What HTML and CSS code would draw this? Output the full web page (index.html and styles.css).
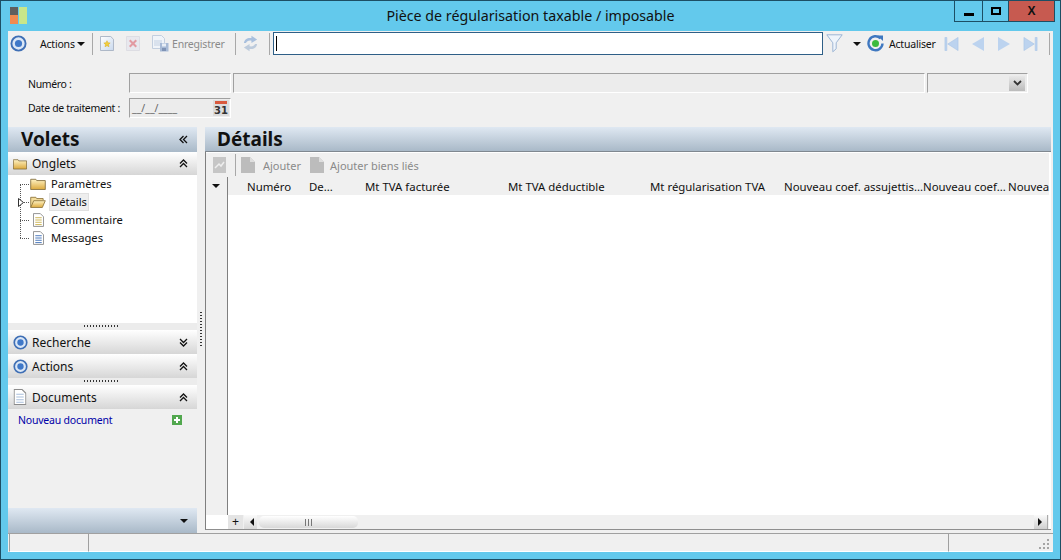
FILE: index.html
```html
<!DOCTYPE html>
<html lang="fr">
<head>
<meta charset="utf-8">
<title>Pièce de régularisation taxable / imposable</title>
<link rel="stylesheet" href="styles.css">
</head>
<body>
<svg class="defs" width="0" height="0">
  <defs>
    <linearGradient id="folderG" x1="0" y1="0" x2="0" y2="1"><stop offset="0" stop-color="#fff3c4"/><stop offset="1" stop-color="#dca93c"/></linearGradient>
    <linearGradient id="pageG" x1="0" y1="0" x2="1" y2="1"><stop offset="0" stop-color="#ffffff"/><stop offset="1" stop-color="#c9d9ee"/></linearGradient>
    <symbol id="target" viewBox="0 0 18 18"><circle cx="9" cy="9" r="7.500" fill="#dbe7f6" stroke="#3f6fb5" stroke-width="2"/><circle cx="9" cy="9" r="3.800" fill="#3f78c8"/></symbol>
    <symbol id="folder" viewBox="0 0 18 14"><path d="M.5 2.500V1.500h6l1 1.500h10v10.500H.5z" fill="url(#folderG)" stroke="#7f6a3a"/></symbol>
    <symbol id="folderOpen" viewBox="0 0 18 14"><path d="M.5 13V1.500h6l1 1.500h7.500v2" fill="#f3dc9a" stroke="#8b7238"/><path d="M.5 13.500 4 5.500h13.500l-3.500 8z" fill="url(#folderG)" stroke="#8b7238"/></symbol>
    <symbol id="doc" viewBox="0 0 12 15"><path d="M.5.500h7.500l3.500 3.500v10.500H.5z" fill="#fff" stroke="#8b8b8b"/><path d="M2.500 5h7M2.500 7.500h7M2.500 10h7M2.500 12.500h7" stroke="currentColor" fill="none"/></symbol>
    <symbol id="grayDoc" viewBox="0 0 14 16"><path d="M0 0h9l5 5v11H0z" fill="#bcbcbc"/><path d="M9 0v5h5z" fill="#dedede"/></symbol>
    <symbol id="navFirst" viewBox="0 0 16 14"><path d="M1 0h2v14H1zM15 0v14L4 7z" fill="#bcd3ef" stroke="#a6c2e4" stroke-width=".6"/></symbol>
    <symbol id="navPrev" viewBox="0 0 12 14"><path d="M12 0v14L0 7z" fill="#bcd3ef"/></symbol>
    <symbol id="navNext" viewBox="0 0 12 14"><path d="M0 0v14l12-7z" fill="#bcd3ef"/></symbol>
    <symbol id="navLast" viewBox="0 0 16 14"><path d="M15 0h-2v14h2zM1 0v14l11-7z" fill="#bcd3ef" stroke="#a6c2e4" stroke-width=".6"/></symbol>
    <symbol id="chevUp" viewBox="0 0 9 9"><path d="M1 4.500 4.500 1 8 4.500M1 8l3.500-3.500L8 8" fill="none" stroke="#111" stroke-width="1.300"/></symbol>
    <symbol id="chevDown" viewBox="0 0 9 9"><path d="M1 1l3.500 3.500L8 1M1 4.500 4.500 8 8 4.500" fill="none" stroke="#111" stroke-width="1.300"/></symbol>
  </defs>
</svg>
<div class="window">
  <header class="titlebar">
    <svg class="app-logo" width="17" height="17" viewBox="0 0 17 17"><rect width="8" height="8" x="0" y="0" fill="#5f5f5f"/><rect width="8" height="9" x="0" y="8" fill="#f08a50"/><rect width="8" height="17" x="9" y="0" fill="#c8e68a"/></svg>
    <div class="title">Pièce de régularisation taxable / imposable</div>
    <div class="winctl">
      <div class="wbtn wmin"><span class="gmin"></span></div>
      <div class="wbtn wmax"><span class="gmax"></span></div>
      <div class="wbtn wclose">X</div>
    </div>
  </header>
  <main class="client">
    <div class="toolbar">
      <svg class="tb-target" width="17" height="17"><use href="#target"/></svg>
      <span class="tb-actions">Actions</span><span class="caret"></span>
      <span class="vsep sep-a"></span>
      <svg class="ic-new" width="14" height="15" viewBox="0 0 15 16"><path d="M.5.500h11l3 3v12H.5z" fill="url(#pageG)" stroke="#a9b4c4"/><path d="M7.500 5l1 2.200 2.400.3-1.800 1.600.5 2.400-2.100-1.200-2.100 1.200.5-2.400-1.800-1.600 2.400-.3z" fill="#f2cf3c" stroke="#d8a818" stroke-width=".5"/></svg>
      <svg class="ic-del" width="14" height="15" viewBox="0 0 15 16"><path d="M.5.500h14v15H.5z" fill="#e8e8ee" stroke="#dcdce2"/><path d="M4 4.500l7 7M11 4.500l-7 7" stroke="#e29aa2" stroke-width="2.200"/></svg>
      <svg class="ic-save" width="17" height="17" viewBox="0 0 17 17"><path d="M.5.500h9l3 3v10H.5z" fill="#f0f4f9" stroke="#c3cfdf"/><path d="M2 6h8M2 8h8M2 10h6" stroke="#c3d0e2"/><rect x="8" y="8" width="8.500" height="8.500" fill="#a7bad6"/><rect x="10" y="8.500" width="4" height="3" fill="#e8eef6"/><rect x="10" y="13" width="4" height="3" fill="#7f93b5"/></svg>
      <span class="tb-save">Enregistrer</span>
      <span class="vsep sep-b"></span>
      <svg class="ic-sync" width="17" height="17" viewBox="0 0 18 18"><path d="M2 8.500C2.500 4.500 6 2.500 10 3.200V.8l6 4-6 3.700V6C7 5.500 5 6.500 4.200 8.500z" fill="#a9c0de"/><path d="M16 9.500c-.5 4-4 6-8 5.300v2.400l-6-4 6-3.700V12c3 .5 5-.5 5.800-2.500z" fill="#bdcbdc"/></svg>
      <span class="vsep sep-c"></span>
      <div class="search"><span class="cursor"></span></div>
      <svg class="ic-filter" width="17" height="19" viewBox="0 0 17 19"><path d="M.8.800h15.400l-6 8v6l-3.400 3v-9z" fill="#eef4fb" stroke="#9db6d4"/></svg>
      <span class="caret caret-f"></span>
      <svg class="ic-refresh" width="17" height="17" viewBox="0 0 17 17"><path d="M13.500 3.300A7 7 0 1 0 15.500 8.500" fill="none" stroke="#3f78c0" stroke-width="2.400"/><path d="M10 .5h6v5.500z" fill="#3f78c0"/><circle cx="8.500" cy="8.500" r="3.500" fill="#3dbb3d"/></svg>
      <span class="tb-refresh">Actualiser</span>
      <svg class="nav nav-first" width="15" height="14"><use href="#navFirst"/></svg>
      <svg class="nav nav-prev" width="12" height="14"><use href="#navPrev"/></svg>
      <svg class="nav nav-next" width="12" height="14"><use href="#navNext"/></svg>
      <svg class="nav nav-last" width="15" height="14"><use href="#navLast"/></svg>
      <span class="vsep sep-d"></span>
    </div>
    <section class="form">
      <div class="form-row row-num">
        <label class="flabel">Numéro :</label>
        <div class="field f-num"></div>
        <div class="field f-wide"></div>
        <div class="field f-combo"><span class="combo-btn"><svg width="9" height="6" viewBox="0 0 9 6"><path d="M1 1l3.500 3.500L8 1" fill="none" stroke="#333" stroke-width="1.800"/></svg></span></div>
      </div>
      <div class="form-row row-date">
        <label class="flabel">Date de traitement :</label>
        <div class="field f-date"><span class="mask">__/__/____</span>
          <svg class="ic-cal" width="16" height="16" viewBox="0 0 16 16"><rect width="16" height="16" fill="#dcdcdc"/><rect x="2" y="1" width="12" height="3" fill="#d9593d"/><text x="8" y="14" class="cal-num" text-anchor="middle">31</text></svg>
        </div>
      </div>
    </section>
    <div class="panes">
      <aside class="side">
        <div class="phead"><h2 class="phead-t">Volets</h2><svg class="dbl" width="9" height="9" viewBox="0 0 9 9"><path d="M4.500 1 1 4.500 4.500 8M8 1 4.500 4.500 8 8" fill="none" stroke="#111" stroke-width="1.300"/></svg></div>
        <div class="acc acc-first"><svg width="14" height="12"><use href="#folder"/></svg><span class="acc-t">Onglets</span><svg class="chev" width="9" height="9"><use href="#chevUp"/></svg></div>
        <div class="tree">
          <div class="tree-line"></div>
          <div class="node"><span class="dash"></span><svg width="16" height="12"><use href="#folder"/></svg><span class="nlabel">Paramètres</span></div>
          <div class="node"><svg class="expander" width="6" height="9" viewBox="0 0 6 9"><path d="M.5.500v8l5-4z" fill="#fff" stroke="#333"/></svg><span class="dash"></span><svg width="16" height="12"><use href="#folderOpen"/></svg><span class="nlabel sel">Détails</span></div>
          <div class="node"><span class="dash"></span><svg class="nd" width="11" height="14" color="#c9b04a"><use href="#doc"/></svg><span class="nlabel">Commentaire</span></div>
          <div class="node"><span class="dash"></span><svg class="nd" width="11" height="14" color="#3f70b8"><use href="#doc"/></svg><span class="nlabel">Messages</span></div>
        </div>
        <div class="grip"></div>
        <div class="acc"><svg width="15" height="15"><use href="#target"/></svg><span class="acc-t acc-tt">Recherche</span><svg class="chev" width="9" height="9"><use href="#chevDown"/></svg></div>
        <div class="acc"><svg width="15" height="15"><use href="#target"/></svg><span class="acc-t acc-tt">Actions</span><svg class="chev" width="9" height="9"><use href="#chevUp"/></svg></div>
        <div class="grip"></div>
        <div class="acc"><svg width="14" height="16" viewBox="0 0 12 15" color="#a9bfdc"><use href="#doc"/></svg><span class="acc-t">Documents</span><svg class="chev" width="9" height="9"><use href="#chevUp"/></svg></div>
        <div class="docs">
          <a class="newdoc">Nouveau document</a>
          <svg width="10" height="10" viewBox="0 0 10 10"><rect width="10" height="10" fill="#52a84f"/><path d="M5 2v6M2 5h6" stroke="#fff" stroke-width="2"/></svg>
        </div>
        <div class="side-foot"><span class="caret caret-foot"></span></div>
      </aside>
      <div class="splitter"><span class="split-dots"></span></div>
      <section class="details">
        <div class="phead dhead"><h2 class="phead-t">Détails</h2></div>
        <div class="dbody">
          <div class="dtools">
            <svg class="dt-ic" width="13" height="16" viewBox="0 0 13 16"><rect width="13" height="16" fill="#c6c6c6"/><path d="M2 11l4-4 2 2 3-4" stroke="#eee" stroke-width="1.500" fill="none"/></svg>
            <span class="vsep dt-sep"></span>
            <svg class="dt-add" width="14" height="16"><use href="#grayDoc"/></svg>
            <span class="dt-t">Ajouter</span>
            <svg class="dt-link" width="14" height="16"><use href="#grayDoc"/></svg>
            <span class="dt-t dt-t2">Ajouter biens liés</span>
          </div>
          <div class="grid">
            <div class="gutter"><span class="caret caret-g"></span></div>
            <div class="gmain">
              <div class="ghead">
                <span class="col c1">Numéro</span>
                <span class="col c2">De...</span>
                <span class="col c3">Mt TVA facturée</span>
                <span class="col c4">Mt TVA déductible</span>
                <span class="col c5">Mt régularisation TVA</span>
                <span class="col c6">Nouveau coef. assujettis...</span>
                <span class="col c7">Nouveau coef...</span>
                <span class="col c8">Nouvea</span>
              </div>
              <div class="gbody"></div>
            </div>
          </div>
          <div class="hscroll">
            <div class="plus">+</div>
            <div class="sb-left"><span class="tri-l"></span></div>
            <div class="thumb"><span class="thumb-lines"></span></div>
            <div class="sb-space"></div>
            <div class="sb-right"><span class="tri-r"></span></div>
          </div>
        </div>
      </section>
    </div>
    <footer class="status">
      <div class="cell c-a"></div>
      <div class="cell c-b"></div>
      <div class="cell c-c"><svg class="resize" width="10" height="10" viewBox="0 0 10 10"><path d="M8 0h2v2H8zM4 4h2v2H4zM8 4h2v2H8zM0 8h2v2H0zM4 8h2v2H4zM8 8h2v2H8z" fill="#a5a5a5"/></svg></div>
    </footer>
  </main>
</div>
</body>
</html>
```
FILE: styles.css
```css
* { box-sizing: border-box; }
html, body { margin: 0; padding: 0; }
body { width: 1061px; height: 560px; overflow: hidden; font-family: "Noto Sans", "Open Sans", sans-serif; font-size: 11px; color: #111; background: #5fc8ea; }
.defs { position: absolute; }
svg { display: block; flex: none; }

.window { width: 1061px; height: 560px; border: 1px solid #1d4e64; background: #63c9ec; display: flex; flex-direction: column; padding: 0 7px 7px 7px; }
.titlebar { height: 30px; flex: none; position: relative; display: flex; align-items: flex-start; }
.app-logo { margin: 6px 0 0 2px; }
.title { position: absolute; left: 0; right: 0; top: 5px; text-align: center; font-size: 14.250px; line-height: 20px; color: #111; }
.winctl { position: absolute; right: -2px; top: 0; display: flex; height: 21px; border: 1px solid #1d4e64; border-top: 0; }
.wbtn { height: 20px; display: flex; align-items: center; justify-content: center; }
.wmin { width: 28px; border-right: 1px solid #1d4e64; }
.wmax { width: 26px; border-right: 1px solid #1d4e64; }
.wclose { width: 45px; background: #c75a50; font-family: "Liberation Sans", sans-serif; font-weight: 700; font-size: 12px; color: #111; }
.gmin { width: 10px; height: 3px; background: #000; margin-top: 6px; }
.gmax { width: 10px; height: 8px; border: 2px solid #000; }

.client { flex: 1; min-height: 0; background: #f0f0f0; display: flex; flex-direction: column; }

.toolbar { height: 25px; flex: none; display: flex; align-items: center; font-size: 10.500px; letter-spacing: -.2px; white-space: nowrap; }
.tb-target { margin-left: 2px; }
.tb-actions { margin-left: 13px; width: 37px; }
.caret { width: 0; height: 0; border-left: 4px solid transparent; border-right: 4px solid transparent; border-top: 4px solid #111; display: inline-block; flex: none; }
.vsep { width: 1px; height: 22px; background: #a8a8a8; flex: none; }
.sep-a { margin-left: 7px; }
.ic-new { margin-left: 7px; }
.ic-del { margin-left: 12px; }
.ic-save { margin-left: 12px; }
.tb-save { margin-left: 3px; color: #8a8a8a; width: 53px; }
.sep-b { margin-left: 10px; }
.ic-sync { margin-left: 6px; }
.sep-c { margin-left: 10px; }
.search { width: 550px; height: 23px; margin-left: 3px; border: 1px solid #2e5f87; background: #fff; padding: 3px 0 0 2px; flex: none; }
.cursor { display: block; width: 1px; height: 15px; background: #000; }
.ic-filter { margin-left: 3px; }
.caret-f { margin-left: 10px; }
.ic-refresh { margin-left: 6px; }
.tb-refresh { margin-left: 5px; width: 46px; }
.nav-first { margin-left: 9px; }
.nav-prev { margin-left: 13px; }
.nav-next { margin-left: 14px; }
.nav-last { margin-left: 13px; }
.sep-d { margin-left: 11px; }

.form { height: 71px; flex: none; padding-top: 17px; }
.form-row { display: flex; align-items: flex-start; }
.row-num { height: 25px; }
.flabel { width: 121px; padding-left: 20px; line-height: 21px; font-size: 10.500px; letter-spacing: -.35px; white-space: nowrap; }
.row-num .flabel { line-height: 22px; }
.field { height: 20px; border-top: 1px solid #a0a0a0; border-left: 1px solid #a0a0a0; border-bottom: 1px solid #fff; border-right: 1px solid #fff; background: #ececec; flex: none; }
.f-num { width: 102px; }
.f-wide { width: 692px; margin-left: 2px; }
.f-combo { width: 101px; margin-left: 2px; display: flex; justify-content: flex-end; align-items: center; padding-right: 2px; }
.combo-btn { width: 16px; height: 15px; background: linear-gradient(#e8e8e8, #bbb); display: flex; align-items: center; justify-content: center; }
.f-date { width: 102px; display: flex; align-items: center; justify-content: space-between; padding: 0 0 0 2px; }
.mask { font-size: 10.500px; color: #666; }
.ic-cal { margin-right: 1px; }
.cal-num { font-family: "DejaVu Sans", sans-serif; font-size: 10px; font-weight: 700; fill: #333; }

.panes { flex: 1; min-height: 0; display: flex; }
.side { width: 189px; flex: none; display: flex; flex-direction: column; }
.phead { height: 25px; flex: none; display: flex; align-items: center; justify-content: space-between; background: linear-gradient(#dfe8f2, #a9b9c8); padding: 0 9px 0 13px; }
.phead-t { margin: 0; font-size: 19px; line-height: 25px; font-weight: 700; color: #111; }
.acc { height: 24px; flex: none; display: flex; align-items: center; padding: 0 9px 0 5px; background: linear-gradient(#ffffff, #d6d6d6); font-size: 12px; }
.acc-first { height: 23px; }
.acc-t { margin-left: 5px; flex: 1; }
.acc-tt { margin-left: 4px; }
.tree { height: 148px; flex: none; background: #fff; position: relative; padding: 0 0 0 10px; font-size: 11.200px; }
.tree-line { position: absolute; left: 12px; top: 9px; height: 54px; border-left: 1px dotted #555; }
.node { height: 18px; display: flex; align-items: center; position: relative; }
.dash { width: 9px; border-top: 1px dotted #555; flex: none; margin-left: 2px; margin-right: 1px; }
.expander { position: absolute; left: 0; top: 5px; }
.nd { margin-left: 3px; margin-right: 2px; }
.nlabel { margin-left: 3px; padding: 0 2px; line-height: 16px; }
.sel { background: #eeeeee; border: 1px solid #e0e0e0; line-height: 16px; padding: 0 1px; }
.grip { height: 7px; flex: none; background: #ececec; display: flex; justify-content: center; position: relative; }
.grip::after { content: ""; width: 34px; height: 2px; margin-top: 2px; margin-left: -3px; background: repeating-linear-gradient(90deg, #333 0 1px, transparent 1px 3px); }
.docs { flex: 1; min-height: 0; background: #f0f0f0; display: flex; justify-content: space-between; align-items: flex-start; padding: 3px 15px 0 10px; }
.newdoc { color: #0000a8; font-size: 10.500px; letter-spacing: -.2px; line-height: 16px; }
.docs svg { margin-top: 3px; }
.side-foot { height: 25px; flex: none; background: linear-gradient(#dfe8f2, #a9b9c8); display: flex; align-items: center; justify-content: flex-end; padding-right: 9px; }

.splitter { width: 8px; flex: none; position: relative; }
.split-dots { position: absolute; left: 3px; top: 185px; width: 2px; height: 36px; background: repeating-linear-gradient(#333 0 1px, transparent 1px 3px); }

.details { flex: 1; min-width: 0; display: flex; flex-direction: column; }
.dhead { margin-right: 2px; padding-left: 12px; border-bottom: 1px solid #808890; height: 25px; }
.dbody { flex: 1; min-height: 0; display: flex; flex-direction: column; border-left: 1px solid #7f7f7f; border-bottom: 1px solid #8f8f8f; margin-bottom: 3px; background: #fff; padding-top: 1px; margin-right: 2px; }
.dtools { height: 24px; flex: none; background: #f0f0f0; display: flex; align-items: center; font-size: 11px; color: #8a8a8a; white-space: nowrap; margin-right: 2px; }
.dt-ic { margin-left: 7px; }
.dt-sep { margin-left: 9px; }
.dt-add { margin-left: 5px; }
.dt-t { margin-left: 8px; }
.dt-link { margin-left: 9px; }
.dt-t2 { margin-left: 6px; }
.grid { flex: 1; min-height: 0; display: flex; }
.gutter { width: 22px; flex: none; background: #f0f0f0; border-right: 1px solid #7f7f7f; display: flex; justify-content: center; padding-top: 7px; }
.caret-g { margin-left: -1px; }
.gmain { flex: 1; min-width: 0; display: flex; flex-direction: column; }
.ghead { height: 18px; flex: none; background: #f0f0f0; display: flex; font-size: 11.400px; line-height: 19px; white-space: nowrap; overflow: hidden; margin-right: 2px; }
.col { display: block; flex: none; overflow: hidden; }
.c1 { width: 62px; margin-left: 19px; }
.c2 { width: 56px; }
.c3 { width: 143px; }
.c4 { width: 142px; }
.c5 { width: 134px; }
.c6 { width: 139px; }
.c7 { width: 85px; }
.c8 { width: 41px; }
.gbody { flex: 1; background: #fff; }
.hscroll { height: 14px; flex: none; display: flex; background: #f0f0f0; margin-left: 22px; margin-right: 2px; align-items: stretch; }
.plus { width: 15px; flex: none; text-align: center; background: #e4e4e4; font-size: 12px; line-height: 14px; font-family: "Liberation Sans", sans-serif; }
.sb-left { width: 13px; margin-left: 1px; flex: none; background: linear-gradient(#fafafa, #d8d8d8); display: flex; align-items: center; justify-content: flex-end; padding-right: 3px; }
.tri-l { width: 0; height: 0; border-top: 4px solid transparent; border-bottom: 4px solid transparent; border-right: 4px solid #111; }
.tri-r { width: 0; height: 0; border-top: 4px solid transparent; border-bottom: 4px solid transparent; border-left: 4px solid #111; }
.thumb { width: 99px; margin: 1px 0 1px 2px; flex: none; border-radius: 5px; background: linear-gradient(#ffffff, #d8d8d8); display: flex; align-items: center; padding-left: 46px; }
.thumb-lines { width: 7px; height: 7px; background: repeating-linear-gradient(90deg, #777 0 1px, transparent 1px 3px); }
.sb-space { flex: 1; }
.sb-right { width: 14px; flex: none; margin-right: 1px; background: linear-gradient(#fafafa, #cfcfcf); border-right: 1px solid #aaa; display: flex; align-items: center; padding-left: 4px; }

.status { height: 19px; flex: none; display: flex; border-top: 1px solid #a0a0a0; padding: 0 1px; }
.cell { height: 18px; border-left: 1px solid #a0a0a0; border-bottom: 1px solid #fff; position: relative; flex: none; }
.c-a { width: 79px; }
.c-b { width: 860px; }
.c-c { flex: 1; }
.resize { position: absolute; right: 3px; bottom: 2px; }
```
